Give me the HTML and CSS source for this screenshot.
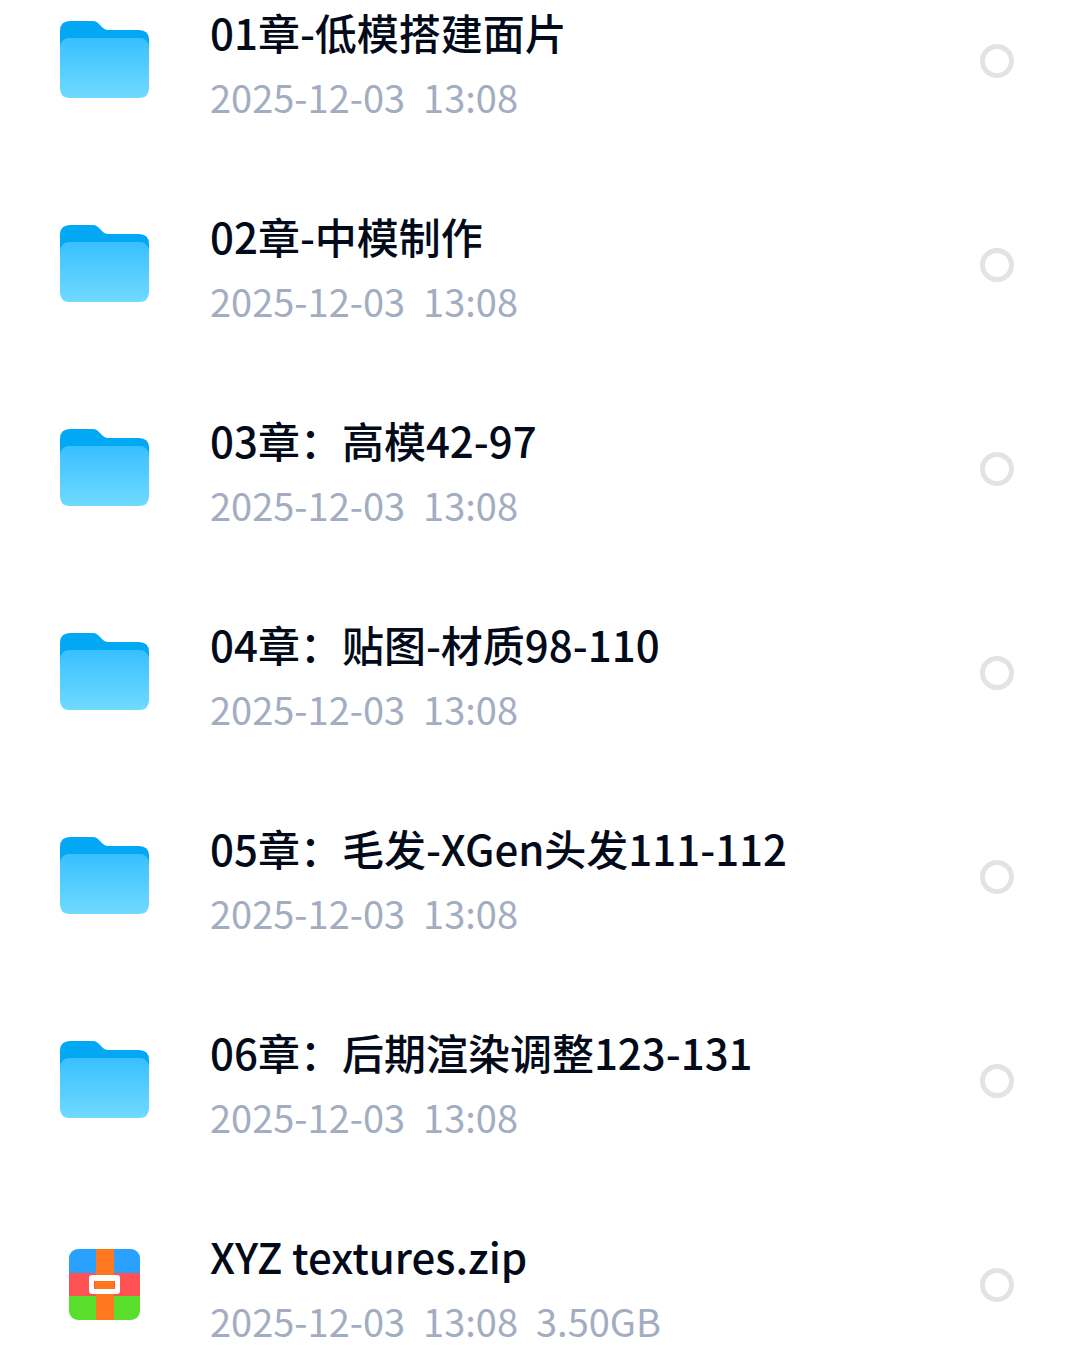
FILE: index.html
```html
<!DOCTYPE html>
<html lang="zh-CN">
<head>
  <meta charset="UTF-8">
  <meta name="viewport" content="width=device-width, initial-scale=1">
  <title>文件列表</title>
  <link rel="stylesheet" href="styles.css">
</head>
<body>
  <!-- Shared icons -->
  <svg class="icon-defs" width="0" height="0" aria-hidden="true">
    <defs>
      <linearGradient id="folderFront" x1="0" y1="0" x2="0" y2="1">
        <stop offset="0" stop-color="#38c0ff"/>
        <stop offset="1" stop-color="#70daff"/>
      </linearGradient>
      <clipPath id="zipShape">
        <rect x="9" y="5" width="71" height="71" rx="9"/>
      </clipPath>
    </defs>
    <symbol id="icon-folder" viewBox="0 0 90 82">
      <path fill="#02a8f3" d="M10 1H33Q36 1 38 3L43 8Q45 10 48 10H79Q89 10 89 20V40H0V11Q0 1 10 1Z"/>
      <path fill="url(#folderFront)" d="M9 18H80Q87 18 89 26V68Q89 78 79 78H10Q0 78 0 68V26Q2 18 9 18Z"/>
    </symbol>
    <symbol id="icon-zip" viewBox="0 0 90 82">
      <g clip-path="url(#zipShape)">
        <rect x="9" y="5" width="71" height="24" fill="#2ba1ff"/>
        <rect x="9" y="29" width="71" height="23" fill="#ff5353"/>
        <rect x="9" y="52" width="71" height="24" fill="#5ade2c"/>
        <rect x="36" y="5" width="18" height="71" fill="#ff781f"/>
      </g>
      <rect x="29" y="31" width="31" height="19" rx="3" fill="#fff"/>
      <rect x="34" y="37" width="21" height="8" fill="#ff781f"/>
      <path fill="#ff5353" d="M34 37h1v8h-1zM54 37h1v8h-1z"/>
    </symbol>
  </svg>

  <ul class="file-list">
    <li class="file-item">
      <svg class="file-icon" aria-hidden="true"><use href="#icon-folder"/></svg>
      <label class="file-info" for="file1">
        <span class="file-name">01章-低模搭建面片</span>
        <span class="file-meta"><span>2025-12-03</span><span>13:08</span></span>
      </label>
      <input type="checkbox" class="file-check" id="file1">
    </li>
    <li class="file-item">
      <svg class="file-icon" aria-hidden="true"><use href="#icon-folder"/></svg>
      <label class="file-info" for="file2">
        <span class="file-name">02章-中模制作</span>
        <span class="file-meta"><span>2025-12-03</span><span>13:08</span></span>
      </label>
      <input type="checkbox" class="file-check" id="file2">
    </li>
    <li class="file-item">
      <svg class="file-icon" aria-hidden="true"><use href="#icon-folder"/></svg>
      <label class="file-info" for="file3">
        <span class="file-name">03章：高模42-97</span>
        <span class="file-meta"><span>2025-12-03</span><span>13:08</span></span>
      </label>
      <input type="checkbox" class="file-check" id="file3">
    </li>
    <li class="file-item">
      <svg class="file-icon" aria-hidden="true"><use href="#icon-folder"/></svg>
      <label class="file-info" for="file4">
        <span class="file-name">04章：贴图-材质98-110</span>
        <span class="file-meta"><span>2025-12-03</span><span>13:08</span></span>
      </label>
      <input type="checkbox" class="file-check" id="file4">
    </li>
    <li class="file-item">
      <svg class="file-icon" aria-hidden="true"><use href="#icon-folder"/></svg>
      <label class="file-info" for="file5">
        <span class="file-name">05章：毛发-XGen头发111-112</span>
        <span class="file-meta"><span>2025-12-03</span><span>13:08</span></span>
      </label>
      <input type="checkbox" class="file-check" id="file5">
    </li>
    <li class="file-item">
      <svg class="file-icon" aria-hidden="true"><use href="#icon-folder"/></svg>
      <label class="file-info" for="file6">
        <span class="file-name">06章：后期渲染调整123-131</span>
        <span class="file-meta"><span>2025-12-03</span><span>13:08</span></span>
      </label>
      <input type="checkbox" class="file-check" id="file6">
    </li>
    <li class="file-item">
      <svg class="file-icon" aria-hidden="true"><use href="#icon-zip"/></svg>
      <label class="file-info" for="file7">
        <span class="file-name">XYZ textures.zip</span>
        <span class="file-meta"><span>2025-12-03</span><span>13:08</span><span>3.50GB</span></span>
      </label>
      <input type="checkbox" class="file-check" id="file7">
    </li>
  </ul>
</body>
</html>
```
FILE: styles.css
```css
* {
  box-sizing: border-box;
}

body {
  margin: 0;
  background-color: #fff;
  color: #030b1a;
  font-family: "Noto Sans CJK SC", sans-serif;
}

.icon-defs {
  display: block;
}

.file-list {
  display: flex;
  flex-direction: column;
  gap: 92px;
  margin: 0;
  padding: 5px 66px 16px 60px;
  list-style: none;
}

.file-item {
  display: flex;
  align-items: center;
}

.file-icon {
  flex: none;
  width: 90px;
  height: 82px;
  margin-right: 60px;
}

.file-info {
  flex: 1;
  min-width: 0;
  cursor: pointer;
}

.file-name {
  display: block;
  margin-bottom: 18px;
  font-size: 42px;
  font-weight: 500;
  line-height: 54px;
}

.file-meta {
  display: flex;
  gap: 18px;
  color: #a3adc2;
  font-size: 38px;
  line-height: 40px;
}

.file-check {
  appearance: none;
  flex: none;
  width: 34px;
  height: 34px;
  margin: 0;
  border: 5px solid #e3e3e3;
  border-radius: 50%;
  cursor: pointer;
}

.file-check:checked {
  border-color: #02a8f3;
}
```
